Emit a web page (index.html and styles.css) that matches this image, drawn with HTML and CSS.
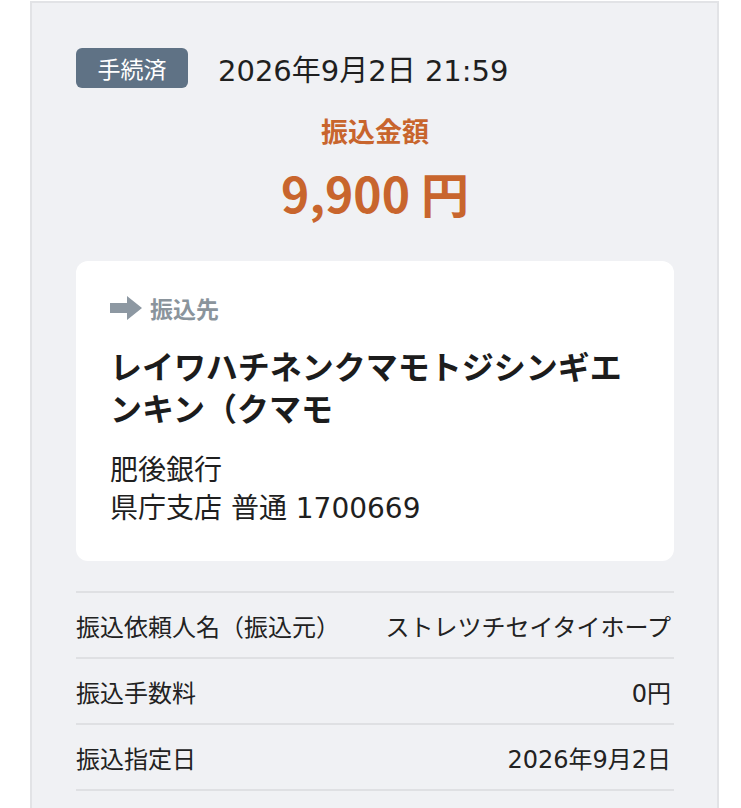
FILE: index.html
```html
<!DOCTYPE html>
<html lang="ja">
<head>
    <meta charset="UTF-8">
    <meta name="viewport" content="width=device-width, initial-scale=1.0">
    <title>振込明細</title>
    <link rel="stylesheet" href="styles.css">
</head>
<body>
    <!-- 振込明細パネル -->
    <div class="panel">
        <div class="head">
            <span class="badge">手続済</span>
            <span class="date">2026年9月2日 21:59</span>
        </div>

        <div class="amount-label">振込金額</div>
        <div class="amount">9,900 円</div>

        <div class="card">
            <div class="card-title">
                <svg class="arrow" width="32" height="24" viewBox="0 0 32 24">
                    <path d="M0 7 H17 V0 L32 12 L17 24 V17 H0 Z" fill="#8d98a2"/>
                </svg>
                振込先
            </div>
            <div class="payee">レイワハチネンクマモトジシンギエンキン（クマモ</div>
            <div class="bank">肥後銀行<br>県庁支店 普通 1700669</div>
        </div>

        <div class="rows">
            <div class="row">
                <span class="label">振込依頼人名（振込元）</span>
                <span class="value">ストレツチセイタイホープ</span>
            </div>
            <div class="row">
                <span class="label">振込手数料</span>
                <span class="value">0円</span>
            </div>
            <div class="row">
                <span class="label">振込指定日</span>
                <span class="value">2026年9月2日</span>
            </div>
        </div>
    </div>
</body>
</html>
```

FILE: styles.css
```css
body {
    margin: 0;
    background-color: #fff;
    font-family: "Noto Sans CJK JP", "Noto Sans", sans-serif;
    color: #222;
}
.panel {
    box-sizing: border-box;
    width: 689px;
    min-height: 840px;
    margin: 1px 0 0 30px;
    padding: 45px 43px 0 44px;
    background-color: #f0f1f4;
    border: 2px solid #e2e3e6;
}
/* 数字は幅の広い書体にする */
.date,
.bank,
.row {
    font-family: "DejaVu Sans", "Noto Sans CJK JP", sans-serif;
}
.head {
    display: flex;
    align-items: center;
    height: 40px;
}
.badge {
    display: flex;
    align-items: center;
    justify-content: center;
    width: 112px;
    height: 40px;
    background-color: #5f7285;
    color: #fff;
    font-size: 23px;
    border-radius: 6px;
}
.date {
    margin-left: 30px;
    font-size: 29px;
    color: #1f1f1f;
}
.amount-label {
    margin-top: 26px;
    text-align: center;
    font-size: 27px;
    line-height: 34px;
    font-weight: bold;
    color: #c8652d;
}
.amount {
    margin-top: 14px;
    text-align: center;
    font-size: 48px;
    line-height: 60px;
    font-weight: bold;
    color: #c8652d;
}
.card {
    margin-top: 39px;
    padding: 32px 34px 33px;
    background-color: #fff;
    border-radius: 12px;
}
.card-title {
    display: flex;
    align-items: center;
    gap: 8px;
    height: 30px;
    font-size: 23px;
    font-weight: bold;
    color: #8a949c;
}
.payee {
    margin-top: 21px;
    font-size: 32px;
    line-height: 42px;
    font-weight: bold;
    color: #1c1c1c;
}
.bank {
    margin-top: 24px;
    font-size: 28px;
    line-height: 38px;
    color: #1f1f1f;
}
.rows {
    margin-top: 30px;
}
.row {
    display: flex;
    justify-content: space-between;
    align-items: center;
    height: 64px;
    border-top: 2px solid #dfe0e3;
    font-size: 24px;
}
.row:last-child {
    border-bottom: 2px solid #dfe0e3;
}
.value {
    text-align: right;
    padding-right: 3px;
}
```
